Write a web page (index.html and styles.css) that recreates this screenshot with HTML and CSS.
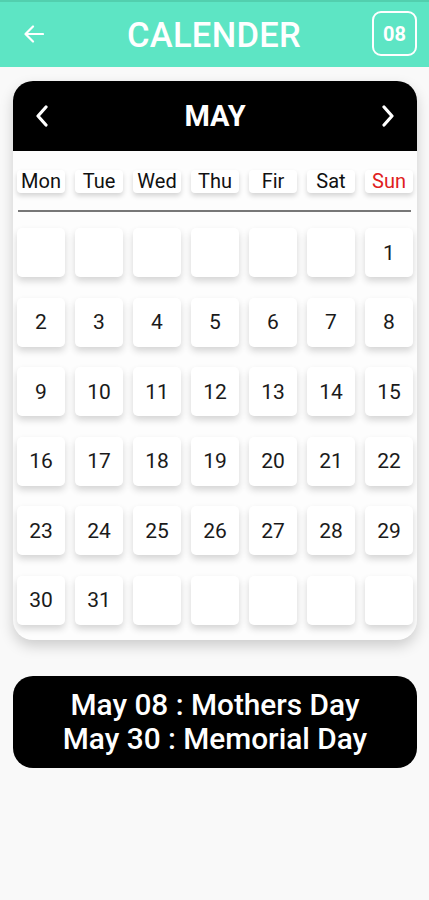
FILE: index.html
```html
<!DOCTYPE html>
<html lang="en">
<head>
  <meta charset="UTF-8" />
  <meta name="viewport" content="width=device-width, initial-scale=1.0"/>
  <title>Calender</title>
  <link rel="stylesheet" href="styles.css">
</head>
<body>

<!-- Top bar -->
<header class="topbar">
  <svg class="back" width="20" height="18" viewBox="0 0 20 18">
    <path d="M19 9H2M9 1.5L1.5 9L9 16.5" fill="none" stroke="#fff" stroke-width="2.2" stroke-linecap="round" stroke-linejoin="round"/>
  </svg>
  <h1 class="title">CALENDER</h1>
  <div class="badge">08</div>
</header>

<!-- Calendar card -->
<div class="card">
  <div class="month-bar">
    <svg width="14" height="22" viewBox="0 0 14 22">
      <path d="M11 2L3 11L11 20" fill="none" stroke="#fff" stroke-width="3.2" stroke-linecap="round" stroke-linejoin="round"/>
    </svg>
    <span class="month">MAY</span>
    <svg width="14" height="22" viewBox="0 0 14 22">
      <path d="M3 2L11 11L3 20" fill="none" stroke="#fff" stroke-width="3.2" stroke-linecap="round" stroke-linejoin="round"/>
    </svg>
  </div>

  <div class="weekdays">
    <span>Mon</span>
    <span>Tue</span>
    <span>Wed</span>
    <span>Thu</span>
    <span>Fir</span>
    <span>Sat</span>
    <span class="sun">Sun</span>
  </div>

  <div class="divider"></div>

  <div class="days" id="days"></div>
</div>

<!-- Events -->
<div class="events">
  <div>May 08 : Mothers Day</div>
  <div>May 30 : Memorial Day</div>
</div>

<script>
  const days = document.getElementById("days");
  // May starts on Sunday: 6 blanks before the 1st
  for (let i = 0; i < 42; i++) {
    const cell = document.createElement("div");
    cell.className = "day";
    const n = i - 5;
    if (n >= 1 && n <= 31) cell.textContent = n;
    days.appendChild(cell);
  }
</script>
</body>
</html>
```

FILE: styles.css
```css
body {
  margin: 0;
  background: #f9f9f9;
  font-family: Roboto, "Noto Sans", sans-serif;
  width: 429px;
  height: 900px;
  overflow: hidden;
}

/* Top bar */
.topbar {
  height: 67px;
  background: #5de5c4;
  display: flex;
  align-items: center;
  justify-content: space-between;
  padding: 0 12px 0 24px;
  box-sizing: border-box;
  border-top: 2px solid #52cfae;
}

.back {
  margin-top: -2px;
}

.title {
  margin: 0 0 0 12px;
  color: #fff;
  font-size: 34.5px;
  font-weight: 500;
  letter-spacing: 0.3px;
}

.badge {
  width: 41px;
  height: 41px;
  border: 2.5px solid #fff;
  border-radius: 9px;
  color: #fff;
  font-size: 20px;
  font-weight: 700;
  display: flex;
  align-items: center;
  justify-content: center;
  margin-top: -2px;
}

/* Calendar card */
.card {
  margin: 14px 12px 0 13px;
  background: #fdfdfd;
  border-radius: 20px;
  overflow: hidden;
  box-shadow: 0 6px 14px rgba(0, 0, 0, 0.18);
  padding-bottom: 15px;
}

.month-bar {
  height: 70px;
  background: #000;
  display: flex;
  align-items: center;
  justify-content: space-between;
  padding: 0 22px 0 22px;
}

.month {
  color: #fff;
  font-size: 29px;
  font-weight: 700;
}

.weekdays {
  display: grid;
  grid-template-columns: repeat(7, 48px);
  column-gap: 10px;
  padding: 19px 4px 0;
}

.weekdays span {
  height: 23px;
  background: #fff;
  border-radius: 4px;
  box-shadow: 0 3px 5px rgba(0, 0, 0, 0.16);
  font-size: 20px;
  line-height: 23px;
  text-align: center;
  color: #111;
}

.weekdays .sun {
  color: #e02020;
}

.divider {
  height: 2px;
  background: #777;
  margin: 17px 6px 0 5px;
}

.days {
  display: grid;
  grid-template-columns: repeat(7, 48px);
  grid-auto-rows: 49px;
  column-gap: 10px;
  row-gap: 20.6px;
  padding: 16px 4px 0;
}

.day {
  background: #fff;
  border-radius: 5px;
  box-shadow: 0 4px 7px rgba(0, 0, 0, 0.16);
  display: flex;
  align-items: center;
  justify-content: center;
  font-size: 21px;
  color: #1a1a1a;
}

/* Events */
.events {
  margin: 36px 12px 0 13px;
  height: 92px;
  background: #000;
  border-radius: 20px;
  color: #fff;
  font-size: 29.8px;
  font-weight: 500;
  line-height: 34px;
  text-align: center;
  display: flex;
  flex-direction: column;
  justify-content: center;
}
```
